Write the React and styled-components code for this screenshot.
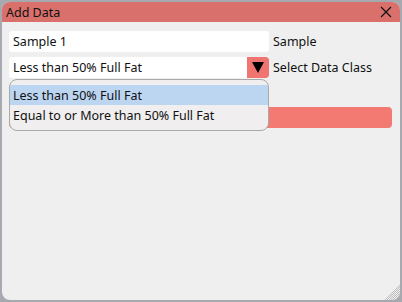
import React, { useState } from 'react';
import styled, { createGlobalStyle } from 'styled-components';

const GlobalStyle = createGlobalStyle`
  html, body {
    margin: 0;
    padding: 0;
    background: #a7a9b1;
    font-family: "Noto Sans", "Open Sans", sans-serif;
  }
`;

const Window = styled.div`
  position: relative;
  width: 398px;
  height: 298px;
  margin: 2px;
  border-radius: 8px;
  overflow: hidden;
  background: #efefef;
  display: flex;
  flex-direction: column;
`;

const TitleBar = styled.div`
  height: 20px;
  background: #d9706c;
  display: flex;
  align-items: center;
  justify-content: space-between;
  padding: 0 6px 0 4px;
  font-size: 12.5px;
  color: #111;
`;

const CloseButton = styled.button`
  width: 16px;
  height: 16px;
  padding: 0;
  border: none;
  background: transparent;
  display: flex;
  align-items: center;
  justify-content: center;
  cursor: pointer;
`;

const Content = styled.div`
  position: relative;
  display: flex;
  flex-direction: column;
  padding: 9px 8px 0 7px;
  gap: 5px;
`;

const Row = styled.div`
  display: flex;
  align-items: center;
  gap: 4px;
`;

const Field = styled.div`
  position: relative;
  width: 260px;
  height: 21px;
  background: #fff;
  border-radius: 3px;
  display: flex;
  align-items: center;
  padding-left: 4px;
  box-sizing: border-box;
  font-size: 12.5px;
  color: #111;
  overflow: hidden;
`;

const Arrow = styled.div`
  position: absolute;
  right: 0;
  top: 0;
  width: 22px;
  height: 21px;
  background: #f0746f;
  border-radius: 0 3px 3px 0;
  display: flex;
  align-items: center;
  justify-content: center;
`;

const Label = styled.span`
  font-size: 12.5px;
  color: #111;
`;

const ActionButton = styled.div`
  margin-top: 24px;
  height: 21px;
  background: #f27a72;
  border-radius: 4px;
`;

const Popup = styled.div`
  position: absolute;
  top: 57px;
  left: 7px;
  width: 260px;
  height: 52px;
  box-sizing: border-box;
  border: 1px solid #a9a9a9;
  border-radius: 8px;
  background: #f0eeee;
  padding-top: 5px;
  z-index: 2;
`;

const Option = styled.div`
  height: 20px;
  display: flex;
  align-items: center;
  padding-left: 3px;
  font-size: 12.5px;
  color: #111;
  background: ${({ active }) => (active ? '#bcd5f1' : 'transparent')};
`;

const Grip = styled.svg`
  position: absolute;
  right: 0;
  bottom: 0;
`;

const options = ['Less than 50% Full Fat', 'Equal to or More than 50% Full Fat'];

export default function App() {
  const [selected] = useState(0);
  return (
    <>
      <GlobalStyle />
      <Window>
        <TitleBar>
          <span>Add Data</span>
          <CloseButton>
            <svg width="12" height="12" viewBox="0 0 12 12">
              <path d="M1 1 L11 11 M11 1 L1 11" stroke="#111" strokeWidth="1.2" />
            </svg>
          </CloseButton>
        </TitleBar>
        <Content>
          <Row>
            <Field>Sample 1</Field>
            <Label>Sample</Label>
          </Row>
          <Row>
            <Field>
              {options[selected]}
              <Arrow>
                <svg width="12" height="11" viewBox="0 0 12 11">
                  <path d="M0 0 H12 L6 11 Z" fill="#000" />
                </svg>
              </Arrow>
            </Field>
            <Label>Select Data Class</Label>
          </Row>
          <ActionButton />
          <Popup>
            {options.map((o, i) => (
              <Option key={o} active={i === selected}>{o}</Option>
            ))}
          </Popup>
        </Content>
        <Grip width="16" height="16" viewBox="0 0 16 16">
          <defs>
            <pattern id="hatch" width="2" height="2" patternUnits="userSpaceOnUse">
              <rect width="1" height="1" fill="#bdbdbd" />
              <rect x="1" y="1" width="1" height="1" fill="#bdbdbd" />
            </pattern>
          </defs>
          <path d="M16 0 L16 16 L0 16 Z" fill="url(#hatch)" />
        </Grip>
      </Window>
    </>
  );
}
